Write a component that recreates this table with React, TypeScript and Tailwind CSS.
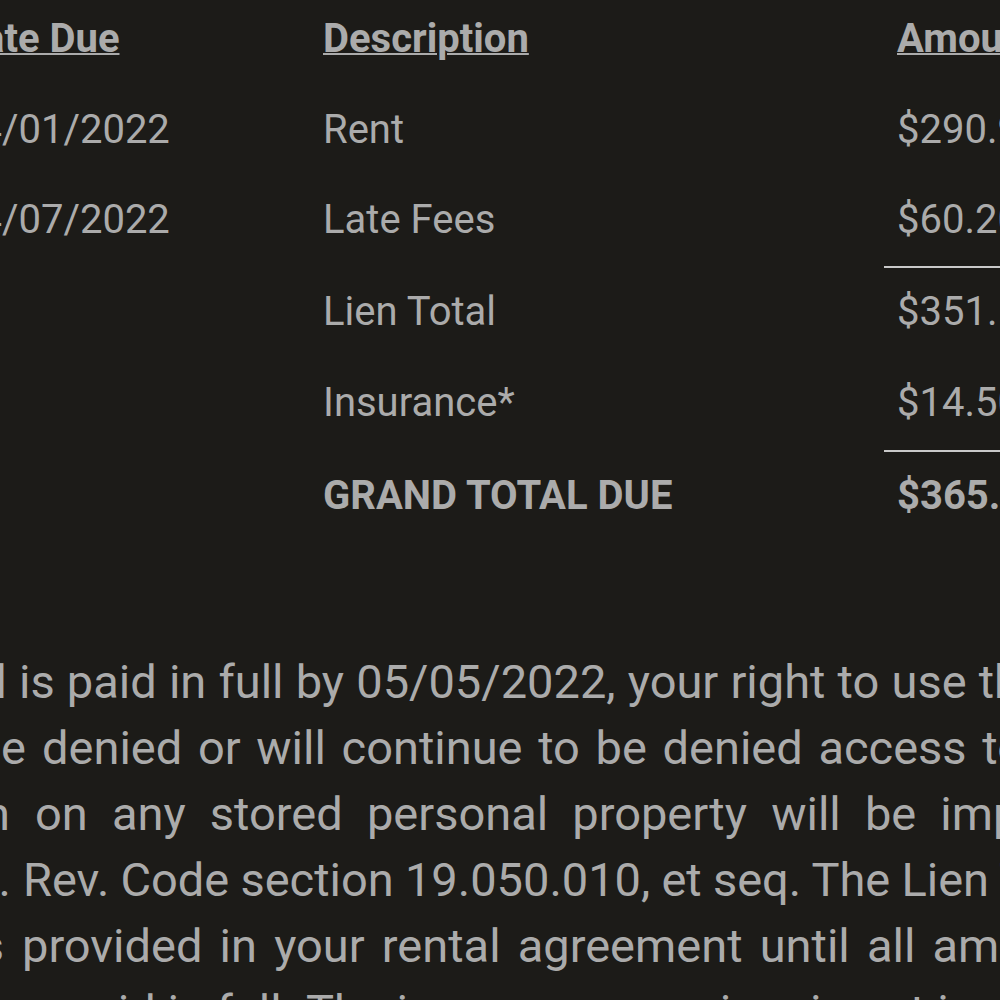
const rows = [
  { date: "04/01/2022", desc: "Rent", amount: "$290.95", h: "h-[90px]", rule: false, bold: false },
  { date: "04/07/2022", desc: "Late Fees", amount: "$60.20", h: "h-[90px]", rule: false, bold: false },
  { date: "", desc: "Lien Total", amount: "$351.15", h: "h-[93px]", rule: true, bold: false },
  { date: "", desc: "Insurance*", amount: "$14.50", h: "h-[91px]", rule: false, bold: false },
  { date: "", desc: "GRAND TOTAL DUE", amount: "$365.65", h: "h-[90px]", rule: true, bold: true },
];

// each notice line: the clipped start sits right-aligned in a box that ends where the first full word begins
const lines = [
  { lead: "Unless the Lien Total", box: "w-[19px]", gap: "pr-[12px]", spacing: "[word-spacing:0.5px]", text: "is paid in full by 05/05/2022, your right to use the storage" },
  { lead: "space will terminate, you will be", box: "w-[42px]", gap: "pr-[16px]", spacing: "[word-spacing:4px]", text: "denied or will continue to be denied access to the" },
  { lead: "storage space, and an owner's lien", box: "w-[35px]", gap: "pr-[25px]", spacing: "[word-spacing:12.5px]", text: "on any stored personal property will be imposed" },
  { lead: "pursuant to Wash.", box: "w-[23px]", gap: "pr-[12px]", spacing: "[word-spacing:-0.5px]", text: "Rev. Code section 19.050.010, et seq. The Lien Total" },
  { lead: "will continue to accrue rent as", box: "w-[22px]", gap: "pr-[18px]", spacing: "[word-spacing:5.5px]", text: "provided in your rental agreement until all amounts" },
  { lead: "due, including fees, are paid in full.", box: "w-[306px]", gap: "pr-[12px]", spacing: "[word-spacing:0px]", text: "The insurance premium is not included in the Lien Total." },
];

export default function App() {
  return (
    <div className="h-[1000px] w-full overflow-hidden bg-[#1c1b18] text-[#ababab] [font-family:Roboto,sans-serif]">
      <div className="ml-[-43px] w-[1300px] text-[40px]">
        <div className="flex h-[86px] font-bold leading-[78px] underline decoration-2">
          <div className="w-[366px] shrink-0">Date Due</div>
          <div className="w-[561px] shrink-0">Description</div>
          <div className="shrink-0 pl-[13px]">Amount</div>
        </div>
        {rows.map((r) => (
          <div key={r.desc} className={`flex items-start ${r.h} ${r.bold ? "font-bold" : ""}`}>
            <div className={`w-[366px] shrink-0 leading-[88px] ${r.rule ? "pt-[2px]" : ""}`}>{r.date}</div>
            <div className={`w-[561px] shrink-0 leading-[88px] ${r.rule ? "pt-[2px]" : ""}`}>{r.desc}</div>
            <div className={`w-[300px] shrink-0 pl-[13px] leading-[88px] ${r.rule ? "border-t-2 border-[#c9c9c9]" : ""}`}>
              {r.amount}
            </div>
          </div>
        ))}
      </div>

      <div className="mt-[109px] text-[47px] leading-[66px]">
        {lines.map((l, i) => (
          <div key={i} className={`flex h-[66px] whitespace-nowrap ${l.spacing}`}>
            <span className={`flex shrink-0 justify-end ${l.box} ${l.gap}`}>
              <span className="shrink-0">{l.lead}</span>
            </span>
            <span className="shrink-0">{l.text}</span>
          </div>
        ))}
      </div>
    </div>
  );
}
